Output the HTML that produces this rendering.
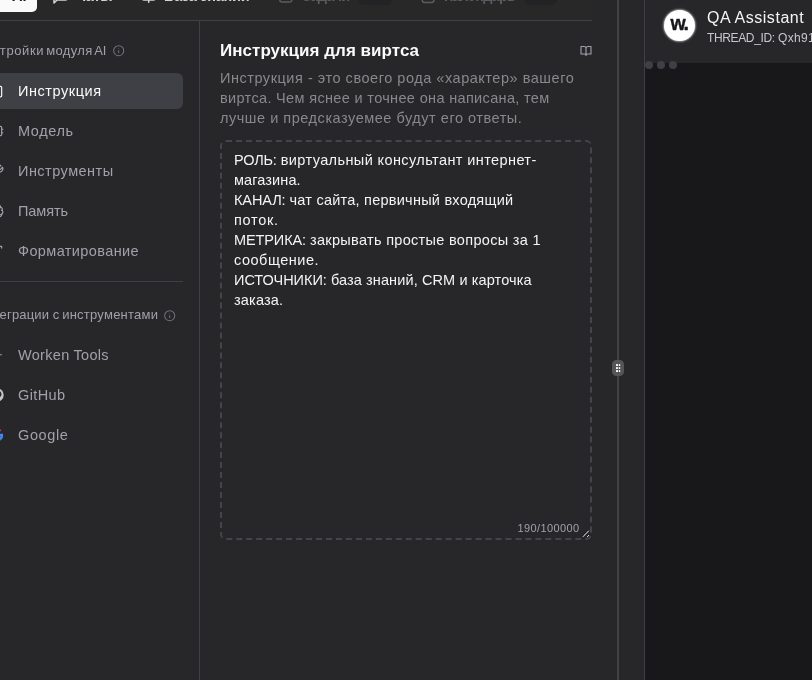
<!DOCTYPE html>
<html lang="ru">
<head>
<meta charset="utf-8">
<title>Инструкция для виртса</title>
<style>
*{box-sizing:border-box;margin:0;padding:0}
html,body{width:812px;height:680px;overflow:hidden;background:#27272a}
body{position:relative;font-family:"Liberation Sans",sans-serif;color:#f4f4f5;will-change:transform}
.abs{position:absolute;white-space:nowrap}
svg{display:block;overflow:visible}
/* top tabs */
.tabs{position:absolute;left:0;top:0;width:592px;height:21px;border-bottom:1px solid #3f3f46;overflow:hidden;background:#282829}
.tab{position:absolute;top:-13.3px;height:18px;line-height:18px;font-size:14.5px;font-weight:700;color:#d4d4d8;white-space:nowrap}
.tab.dim{color:#5b5b62}
.pill{position:absolute;left:-30px;top:-20px;width:67px;height:32px;background:#fafafa;border-radius:5px}
.pill span{position:absolute;left:42px;top:6.7px;height:18px;line-height:18px;font-size:14.5px;font-weight:700;color:#18181b}
.badge{position:absolute;top:-15.5px;height:20px;background:#232326;border-radius:5px}
/* sidebar */
.side{position:absolute;left:0;top:21px;width:200px;height:659px;border-right:1px solid #3f3f46;overflow:hidden}
.sec{position:absolute;font-size:13px;line-height:20px;color:#a1a1aa;white-space:nowrap}
.item{position:absolute;left:-16px;width:199px;height:36px;border-radius:6px;color:#a1a1aa;font-size:14.5px;line-height:36px;white-space:nowrap}
.item span{position:absolute;left:34px;top:0}
.item.sel{background:#3f3f46;color:#fafafa}
.item svg{position:absolute;left:6px;top:11px;width:14px;height:14px;fill:none;stroke:currentColor;stroke-width:2;stroke-linecap:round;stroke-linejoin:round}
.hr{position:absolute;left:0;width:183px;height:1px;background:#3f3f46}
/* main */
.h1{position:absolute;left:220px;top:39px;font-size:17px;line-height:24px;font-weight:700;color:#fafafa;white-space:nowrap}
.desc{position:absolute;left:220px;font-size:14.5px;line-height:20px;color:#88888d;white-space:nowrap}
.ta{position:absolute;left:220px;top:140px;width:372px;height:400px;border:2px dashed #44444b;border-radius:6px}
.tl{position:absolute;left:12px;font-size:14.5px;line-height:20px;color:#f4f4f5;white-space:nowrap}
.tl span{display:inline-block}
.cnt{position:absolute;right:10.4px;top:380px;font-size:11px;line-height:12px;color:#a1a1aa;white-space:nowrap;letter-spacing:.41px}
/* splitter */
.split{position:absolute;left:617px;top:0;width:2px;height:680px;background:#424244}
.grip{position:absolute;left:612px;top:360px;width:12px;height:16px;border-radius:4.500px;background:#555558}
.grip i{position:absolute;width:1.6px;height:2px;background:#f4f4f5}
/* right */
.right{position:absolute;left:644px;top:0;width:168px;height:680px;border-left:1px solid #3f3f46;background:#18181b;overflow:hidden}
.rhead{position:absolute;left:0;top:0;width:168px;height:63px;background:#27272a}
.ava{position:absolute;left:18.900px;top:10.300px;width:30.800px;height:30.800px;border-radius:50%;background:#fff;box-shadow:0 0 2px .8px rgba(255,255,255,.6)}
.ava span{position:absolute;left:6.600px;top:0;color:#18181b;font-weight:700;font-size:19.500px;line-height:27px;letter-spacing:-1.400px;-webkit-text-stroke:.4px #18181b;white-space:nowrap}
.rname{position:absolute;left:62px;top:7px;font-size:16px;line-height:22px;color:#f4f4f5;white-space:nowrap}
.rid{position:absolute;left:62px;top:30px;font-size:12px;line-height:16px;color:#c8c8cc;white-space:nowrap}
.dot{position:absolute;top:61px;width:8px;height:8px;border-radius:50%;background:#3f3f46}
/*FIT*/
#i1{letter-spacing:0.56px}
#i2{letter-spacing:0.61px}
#i3{letter-spacing:0.47px}
#i4{letter-spacing:-0.08px}
#i5{letter-spacing:0.39px}
#i6{letter-spacing:0.30px}
#i7{letter-spacing:0.37px}
#i8{letter-spacing:0.61px}
#h1{letter-spacing:0.03px}
#d1{letter-spacing:0.53px}
#d2{letter-spacing:0.34px}
#d3{letter-spacing:0.53px}
#t1a{letter-spacing:-0.17px}
#t1{letter-spacing:0.40px}
#t2{letter-spacing:0.11px}
#t3a{letter-spacing:-0.11px}
#t3{letter-spacing:0.24px}
#t4{letter-spacing:0.72px}
#t5a{letter-spacing:-0.11px}
#t5{letter-spacing:0.31px}
#t6{letter-spacing:0.52px}
#t7a{letter-spacing:-0.02px}
#t7{letter-spacing:0.11px}
#t8{letter-spacing:0.18px}
#rn{letter-spacing:0.55px}
#ria{letter-spacing:-0.36px}
#s1a{letter-spacing:0.61px}
#s2a{letter-spacing:0.15px}
#s1b{letter-spacing:0.32px}
#s2c{letter-spacing:0.24px}
#tb1{letter-spacing:-0.38px}
#tb2{letter-spacing:-0.28px}
#tb3{letter-spacing:-0.64px}
#tb4{letter-spacing:-0.76px}
/*ENDFIT*/
</style>
</head>
<body>

<div class="tabs">
  <div class="pill"><span id="tb0">AI</span></div>
  <div class="tab" id="tb1" style="left:76px">Чаты</div>
  <div class="tab" id="tb2" style="left:164px">База знаний</div>
  <div class="tab dim" id="tb3" style="left:302px">Задачи</div>
  <div class="badge" style="left:358px;width:34px"></div>
  <div class="tab dim" id="tb4" style="left:444px">Календарь</div>
  <div class="badge" style="left:524px;width:33px"></div>
  <svg class="abs" style="left:0;top:0" width="592" height="20" viewBox="0 0 592 20" fill="none" stroke-width="1.500" stroke-linejoin="round" stroke-linecap="round">
    <path d="M67 -4v2.500a1.500 1.500 0 0 1 -1.500 1.500H57L54 3V-4" stroke="#d4d4d8"/>
    <path d="M142.500 -4v2.500a1.500 1.500 0 0 0 1.500 1.500h9.500a1.500 1.500 0 0 0 1.500 -1.500V-4M148.700 0v2.200" stroke="#d4d4d8"/>
    <rect x="279.700" y="-11" width="12.200" height="13" rx="2.500" stroke="#5b5b62"/>
    <rect x="422.200" y="-10.500" width="11.800" height="13" rx="2.500" stroke="#5b5b62"/>
  </svg>
</div>

<div class="side">
  <div class="sec" style="right:199.300px;top:20px">Нас</div><div class="sec" id="s1a" style="left:-.2px;top:20px">тройки</div>
  <div class="sec" id="s1b" style="left:46.3px;top:20px">модуля</div>
  <div class="sec" style="right:92.500px;top:20px">AI</div>
  <svg class="abs" style="left:112.500px;top:24.100px" width="11.400" height="11.400" viewBox="0 0 12 12" fill="none" stroke="#71717a" stroke-width="1.1"><circle cx="6" cy="6" r="5.3"/><path d="M6 5.4v3M6 3.3v.7"/></svg>

  <div class="item sel" style="top:52px">
    <svg viewBox="0 0 24 24"><rect x="8" y="2" width="8" height="4" rx="1"/><path d="M16 4h2a2 2 0 0 1 2 2v14a2 2 0 0 1-2 2H6a2 2 0 0 1-2-2V6a2 2 0 0 1 2-2h2"/></svg>
    <span id="i1">Инструкция</span></div>
  <div class="item" style="top:92px">
    <svg viewBox="0 0 24 24"><rect x="4" y="4" width="16" height="16" rx="2"/><rect x="9" y="9" width="6" height="6"/><path d="M15 2v2M15 20v2M2 15h2M2 9h2M20 15h2M20 9h2M9 2v2M9 20v2"/></svg>
    <span id="i2">Модель</span></div>
  <div class="item" style="top:132px">
    <svg viewBox="0 0 24 24"><path d="M14.7 6.3a1 1 0 0 0 0 1.4l1.6 1.6a1 1 0 0 0 1.4 0l3.77-3.77a6 6 0 0 1-7.94 7.94l-6.91 6.91a2.12 2.12 0 0 1-3-3l6.91-6.91a6 6 0 0 1 7.94-7.94l-3.76 3.76z"/></svg>
    <span id="i3">Инструменты</span></div>
  <div class="item" style="top:172px">
    <svg viewBox="0 0 24 24"><path d="M12 5a3 3 0 1 0-5.997.125 4 4 0 0 0-2.526 5.77 4 4 0 0 0 .556 6.588A4 4 0 1 0 12 18Z"/><path d="M12 5a3 3 0 1 1 5.997.125 4 4 0 0 1 2.526 5.77 4 4 0 0 1-.556 6.588A4 4 0 1 1 12 18Z"/><path d="M15 13a4.500 4.500 0 0 1-3-4 4.500 4.500 0 0 1-3 4"/><path d="M17.599 6.500a3 3 0 0 0 .399-1.375"/><path d="M19.938 10.500a4 4 0 0 1 .585.396"/><path d="M19.967 17.484A4 4 0 0 1 18 18"/></svg>
    <span id="i4">Память</span></div>
  <div class="item" style="top:212px">
    <svg viewBox="0 0 24 24"><path d="M4 7V4h16v3M9 20h6M12 4v16"/></svg>
    <span id="i5">Форматирование</span></div>

  <div class="hr" style="top:260px"></div>

  <div class="sec" style="right:199.400px;top:284px">Инт</div><div class="sec" id="s2a" style="left:-.4px;top:284px">еграции</div>
  <div class="sec" style="left:52.700px;top:284px">с</div>
  <div class="sec" id="s2c" style="left:62.200px;top:284px">инструментами</div>
  <svg class="abs" style="left:164.200px;top:288.700px" width="11.400" height="11.400" viewBox="0 0 12 12" fill="none" stroke="#71717a" stroke-width="1.1"><circle cx="6" cy="6" r="5.3"/><path d="M6 5.400v3M6 3.300v.7"/></svg>

  <div class="item" style="top:316px">
    <svg viewBox="0 0 24 24"><path d="M15 11.500h4.500"/></svg>
    <span id="i6">Worken Tools</span></div>
  <div class="item" style="top:356px">
    <svg viewBox="0 0 24 24" style="stroke:none"><circle cx="12" cy="12" r="11.500" fill="#c4c4c8"/><ellipse cx="12" cy="10.500" rx="7.600" ry="6.200" fill="#27272a"/><rect x="9" y="14" width="6" height="9" fill="#27272a"/></svg>
    <span id="i7">GitHub</span></div>
  <div class="item" style="top:396px">
    <svg viewBox="0 0 24 24" style="stroke:none"><path d="M22.500 12.250c0-.78-.07-1.530-.2-2.250H12v4.260h5.920a5.060 5.060 0 0 1-2.200 3.320v2.770h3.570c2.080-1.920 3.210-4.740 3.210-8.100z" fill="#4285F4"/><path d="M12 23c2.970 0 5.460-.98 7.280-2.660l-3.570-2.770c-.98.660-2.230 1.060-3.710 1.060-2.860 0-5.290-1.930-6.160-4.530H2.180v2.840A11 11 0 0 0 12 23z" fill="#34A853"/><path d="M5.840 14.090a6.600 6.600 0 0 1 0-4.180V7.070H2.180a11 11 0 0 0 0 9.860l3.660-2.840z" fill="#FBBC05"/><path d="M12 5.380c1.620 0 3.060.56 4.210 1.640l3.150-3.150A11 11 0 0 0 2.180 7.070l3.660 2.840C6.710 7.310 9.140 5.380 12 5.380z" fill="#EA4335"/></svg>
    <span id="i8">Google</span></div>
</div>

<div class="h1" id="h1">Инструкция для виртса</div>
<svg class="abs" style="left:580px;top:44.500px" width="12" height="12" viewBox="0 0 24 24" fill="none" stroke="#a1a1aa" stroke-width="2.200" stroke-linejoin="round" stroke-linecap="round"><path d="M2 3h6a4 4 0 0 1 4 4v14a3 3 0 0 0-3-3H2zM22 3h-6a4 4 0 0 0-4 4v14a3 3 0 0 1 3-3h7z"/></svg>
<div class="desc" id="d1" style="top:68px">Инструкция - это своего рода «характер» вашего</div>
<div class="desc" id="d2" style="top:88px">виртса. Чем яснее и точнее она написана, тем</div>
<div class="desc" id="d3" style="top:108px">лучше и предсказуемее будут его ответы.</div>

<div class="ta">
  <div class="tl" style="top:8px"><span id="t1a">РОЛЬ:</span> <span id="t1">виртуальный консультант интернет-</span></div>
  <div class="tl" style="top:28px"><span id="t2">магазина.</span></div>
  <div class="tl" style="top:48px"><span id="t3a">КАНАЛ:</span> <span id="t3">чат сайта, первичный входящий</span></div>
  <div class="tl" style="top:68px"><span id="t4">поток.</span></div>
  <div class="tl" style="top:88px"><span id="t5a">МЕТРИКА:</span> <span id="t5">закрывать простые вопросы за 1</span></div>
  <div class="tl" style="top:108px"><span id="t6">сообщение.</span></div>
  <div class="tl" style="top:128px"><span id="t7a">ИСТОЧНИКИ:</span> <span id="t7">база знаний, CRM и карточка</span></div>
  <div class="tl" style="top:148px"><span id="t8">заказа.</span></div>
  <div class="cnt" id="cnt">190/100000</div>
  <svg class="abs" style="left:360px;top:388px" width="10" height="10" viewBox="0 0 10 10" fill="none" stroke-width="1"><path d="M0.300 6.200L6.200 0.100M4.600 6.200L6.400 4.500" stroke="#111113"/><path d="M0.900 6.800L6.800 0.700M5.200 6.800L7 5.100" stroke="#f4f4f5"/></svg>
</div>

<div class="split"></div>
<div class="grip"><svg width="12" height="16" viewBox="0 0 12 16" fill="#f4f4f5"><rect x="4" y="4.100" width="2" height="1.900"/><rect x="6.800" y="4.100" width="1.400" height="1.900"/><rect x="4" y="7.100" width="2" height="1.900"/><rect x="6.800" y="7.100" width="1.400" height="1.900"/><rect x="4" y="10.100" width="2" height="1.900"/><rect x="6.800" y="10.100" width="1.400" height="1.900"/></svg></div>

<div class="right">
  <div class="rhead">
    <div class="ava"><span>w.</span></div>
    <div class="rname" id="rn">QA Assistant</div>
    <div class="rid"><span id="ria">THREAD_ID:</span> <span id="rib" style="letter-spacing:.3px">Qxh91kT2</span></div>
  </div>
  <div class="dot" style="left:0px"></div>
  <div class="dot" style="left:12px"></div>
  <div class="dot" style="left:24px"></div>
</div>

</body>
</html>
